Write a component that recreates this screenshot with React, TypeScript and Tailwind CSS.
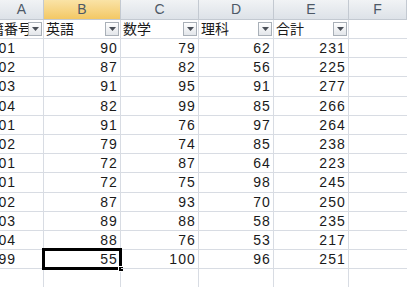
import React from "react";

const cols = [
  { key: "A", w: 44 },
  { key: "B", w: 77 },
  { key: "C", w: 78 },
  { key: "D", w: 75 },
  { key: "E", w: 75 },
  { key: "F", w: 58 },
];

const rows: [string, number, number, number, number][] = [
  ["01", 90, 79, 62, 231],
  ["02", 87, 82, 56, 225],
  ["03", 91, 95, 91, 277],
  ["04", 82, 99, 85, 266],
  ["01", 91, 76, 97, 264],
  ["02", 79, 74, 85, 238],
  ["01", 72, 87, 64, 223],
  ["01", 72, 75, 98, 245],
  ["02", 87, 93, 70, 250],
  ["03", 89, 88, 58, 235],
  ["04", 88, 76, 53, 217],
  ["99", 55, 100, 96, 251],
];

// heights approximate a 19.2px row pitch
const tall = [false, false, true, false, false, false, false, true, false, false, false, false, true, false];

function FilterBtn() {
  return (
    <div className="w-[14px] h-[14px] shrink-0 border border-[#a9b0b8] bg-gradient-to-b from-[#ffffff] to-[#e3e6ea] flex items-center justify-center">
      <svg width="7" height="4" viewBox="0 0 7 4">
        <path d="M0 0 L7 0 L3.5 4 Z" fill="#4a4f57" />
      </svg>
    </div>
  );
}

export default function App() {
  const font = { fontFamily: '"Liberation Sans", "Noto Sans CJK JP", sans-serif' };
  return (
    <div className="w-[407px] h-[287px] overflow-hidden bg-white text-[#1a1a1a]" style={font}>
      {/* column letters */}
      <div className="flex h-[20px]">
        {cols.map((c) => (
          <div
            key={c.key}
            style={{ width: c.w }}
            className={
              "shrink-0 border-r border-b border-[#c3c9d1] flex items-center justify-center text-[14px] text-[#4d5866] " +
              (c.key === "B"
                ? "bg-gradient-to-b from-[#fae3a6] to-[#f3c863]"
                : "bg-gradient-to-b from-[#f1f3f5] to-[#dde2e8]")
            }
          >
            {c.key}
          </div>
        ))}
      </div>
      {/* field header row */}
      <div className="flex h-[19px]">
        {[
          { t: "学籍番号", a: true },
          { t: "英語" },
          { t: "数学" },
          { t: "理科" },
          { t: "合計" },
        ].map((f, i) => (
          <div
            key={i}
            style={{ width: cols[i].w }}
            className="shrink-0 border-r border-b border-[#d8dce3] flex items-center overflow-hidden pr-[1px]"
          >
            <div className={"flex-1 overflow-hidden whitespace-nowrap text-[14px] leading-none " + (f.a ? "" : "pl-[2px]")}>
              <span className={f.a ? "inline-block ml-[-24px]" : ""}>{f.t}</span>
            </div>
            <FilterBtn />
          </div>
        ))}
        <div style={{ width: cols[5].w }} className="shrink-0 border-b border-[#d8dce3]" />
      </div>
      {rows.map((r, ri) => (
        <div key={ri} className={"flex " + (tall[ri] ? "h-[20px]" : "h-[19px]")}>
          <div
            style={{ width: cols[0].w }}
            className="shrink-0 border-r border-b border-[#d8dce3] overflow-hidden whitespace-nowrap flex items-center text-[14px] tracking-[0.08em]"
          >
            <span className="inline-block ml-[-12px]">S{r[0]}</span>
          </div>
          {[r[1], r[2], r[3], r[4]].map((v, ci) => {
            const sel = ri === rows.length - 1 && ci === 0;
            return (
              <div
                key={ci}
                style={{ width: cols[ci + 1].w }}
                className="relative shrink-0 border-r border-b border-[#d8dce3] flex items-center justify-end pr-[2px] text-[14px] tracking-[0.08em]"
              >
                {v}
                {sel && (
                  <>
                    <div className="absolute left-[-2px] top-[-2px] right-[-2px] bottom-[-2px] border-[3px] border-black" />
                    <div className="absolute right-[-4px] bottom-[-4px] w-[6px] h-[6px] bg-black border border-white" />
                  </>
                )}
              </div>
            );
          })}
          <div style={{ width: cols[5].w }} className="shrink-0 border-b border-[#d8dce3]" />
        </div>
      ))}
      <div className="flex h-[19px]">
        {cols.map((c, i) => (
          <div
            key={c.key}
            style={{ width: c.w }}
            className={"shrink-0 border-b border-[#d8dce3] " + (i < 5 ? "border-r" : "")}
          />
        ))}
      </div>
    </div>
  );
}
